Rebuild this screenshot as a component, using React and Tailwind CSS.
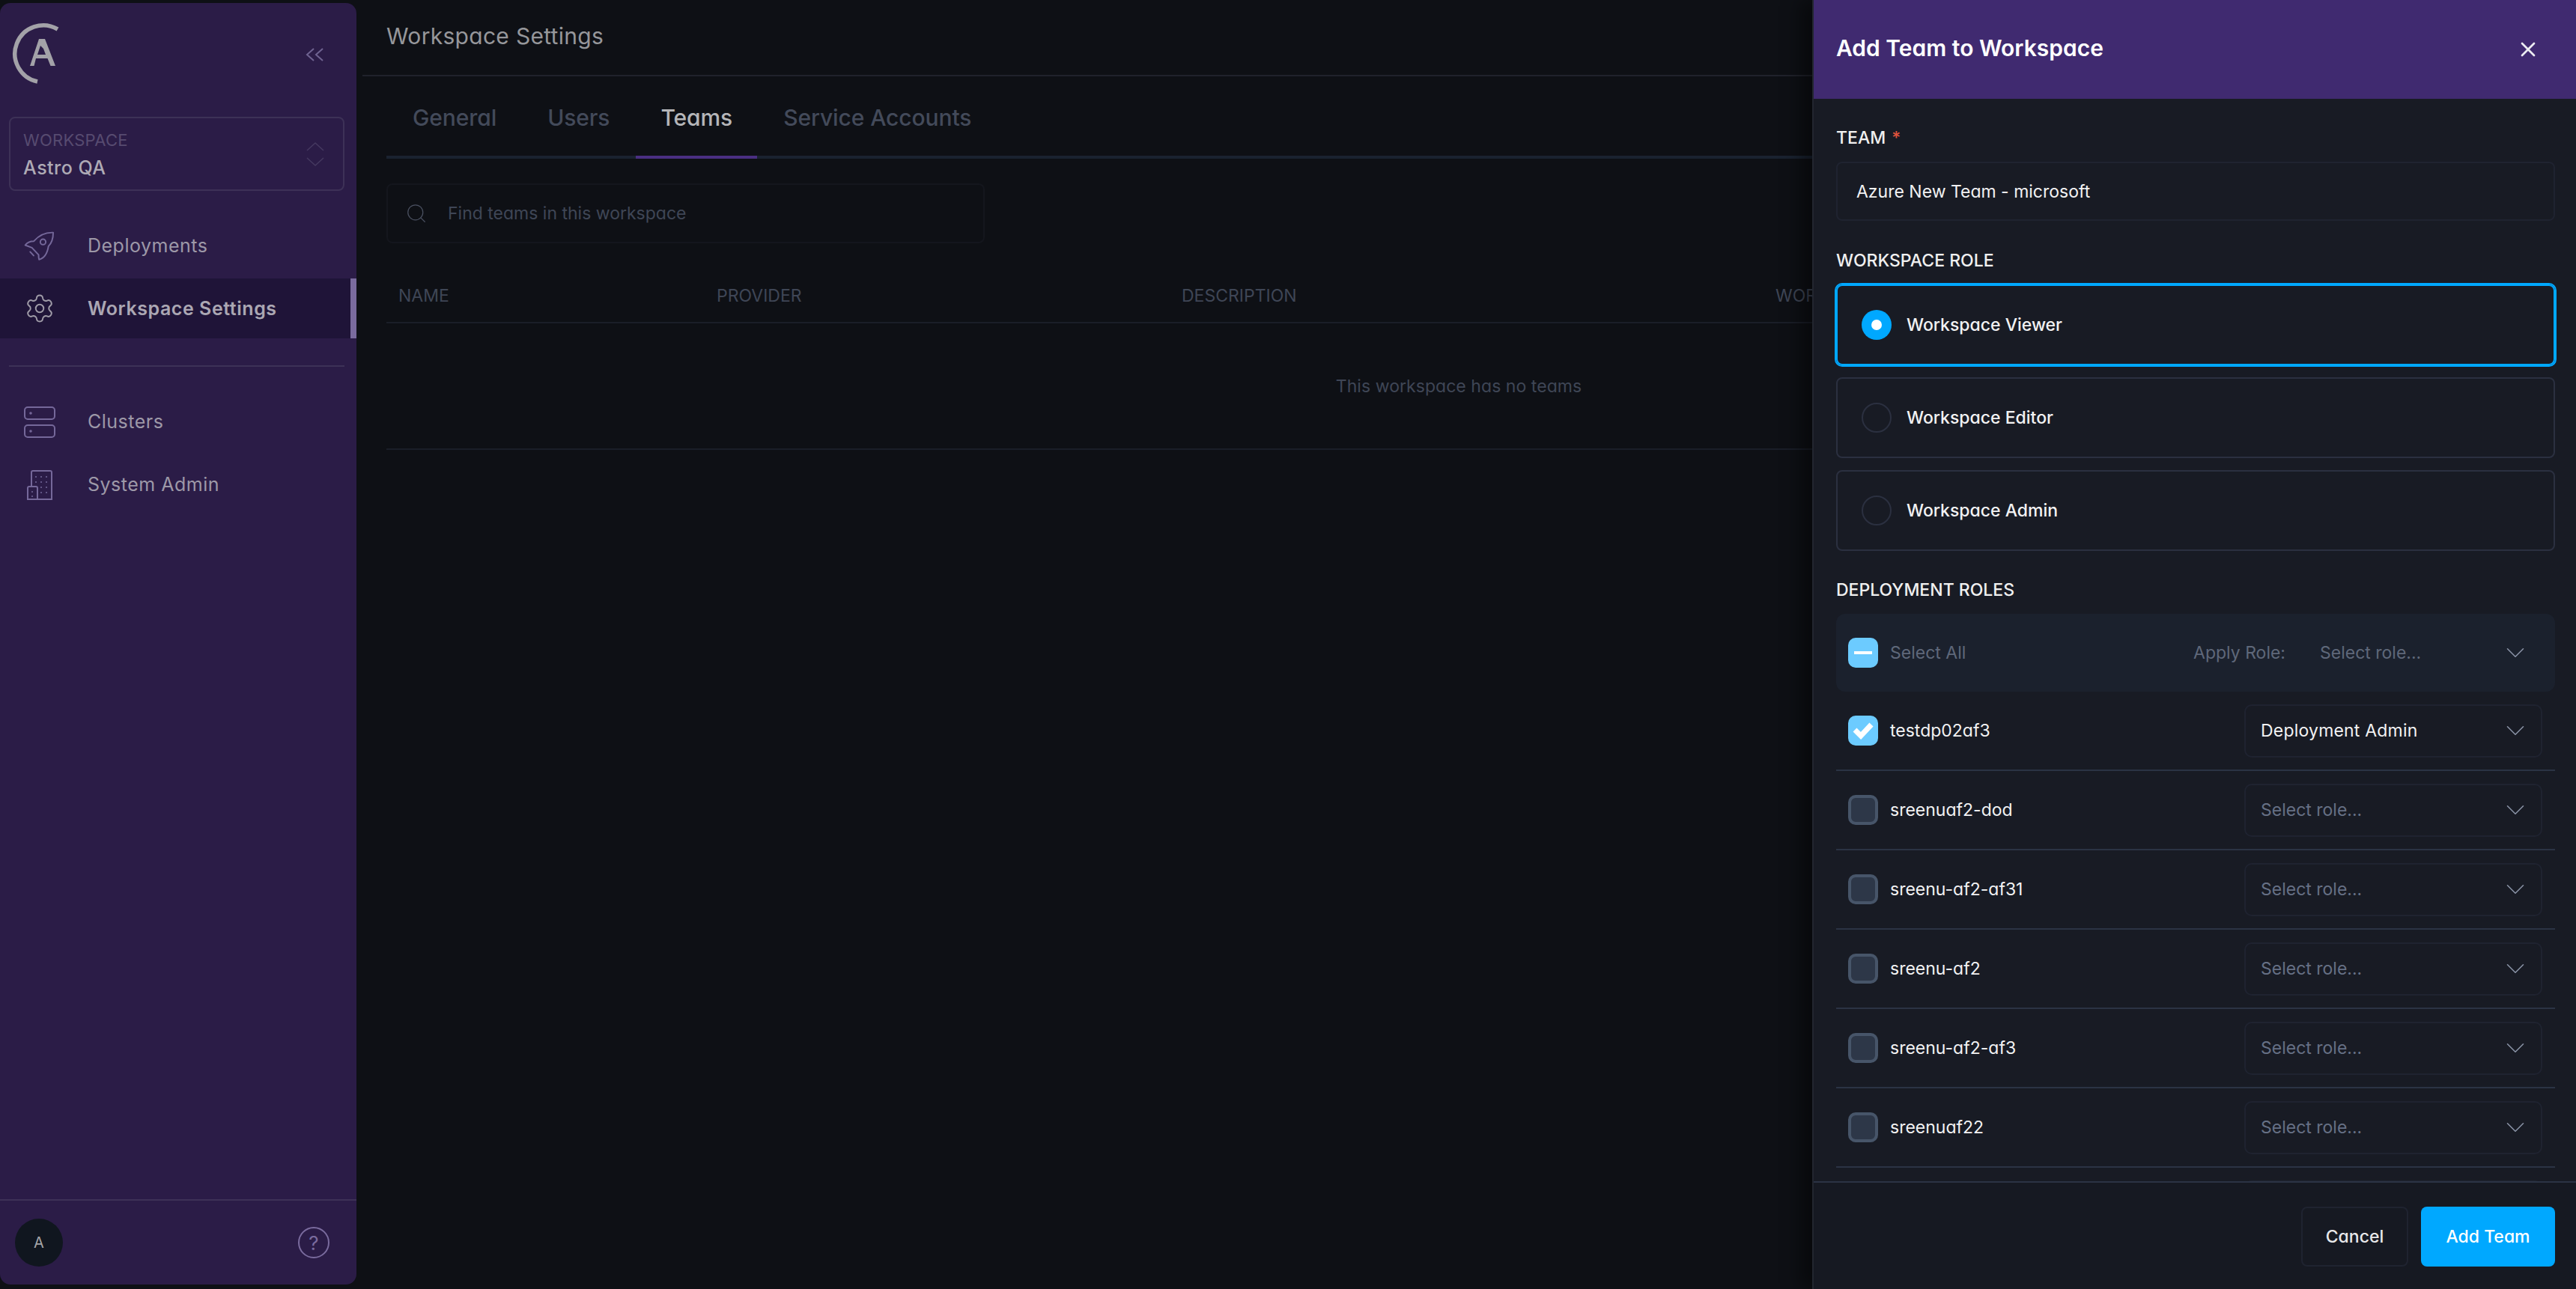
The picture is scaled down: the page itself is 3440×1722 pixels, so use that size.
import React from "react";
import { ChevronDown, Search, Settings, X } from "lucide-react";

const font = "font-['Inter','Liberation_Sans',sans-serif]";
const alt = "[font-feature-settings:'cv11']";

const Logo = () => (
  <svg width="66" height="84" viewBox="0 0 66 84" fill="none">
    <path d="M62 11 A38 38 0 1 0 35 81" stroke="#a3a2a8" strokeWidth="5.5" />
    <path fillRule="evenodd" d="M25 60 L37 24 L45 24 L59 60 L52.5 60 L48.5 50 L33 50 L30.5 60 Z M39 33 L35 45 L46 45 L43 37 Z" fill="#a3a2a8" />
  </svg>
);

const RocketIcon = () => (
  <svg width="43" height="42" viewBox="60 50 130 125" fill="none" stroke="#75689a" strokeWidth="6" strokeLinejoin="round" strokeLinecap="round">
    <path d="M181 57 C150 56 125 66 103 92 C90 92 78 94 68 108 L95 118 L122 147 C122 154 122 160 124 166 C140 162 156 150 162 112 C176 98 181 80 181 57 Z" />
    <circle cx="140" cy="95" r="11" />
    <path d="M88 135 L102 150" />
  </svg>
);

const ClustersIcon = () => (
  <svg width="42" height="42" viewBox="0 0 42 42" fill="none" stroke="#75689a" strokeWidth="2">
    <rect x="1" y="1" width="40" height="16" rx="4" />
    <rect x="1" y="25" width="40" height="16" rx="4" />
    <circle cx="9" cy="9" r="0.8" fill="#75689a" />
    <circle cx="9" cy="33" r="0.8" fill="#75689a" />
  </svg>
);

const BuildingIcon = () => (
  <svg width="34" height="40" viewBox="0 0 34 40" fill="none" stroke="#75689a" strokeWidth="2">
    <path d="M6 22 V3 Q6 1 8 1 H31 Q33 1 33 3 V39 H14" />
    <path d="M1 39 V24 Q1 22 3 22 H12 Q14 22 14 24 V39 Z" />
    <g fill="#75689a" stroke="none">
      <circle cx="12" cy="9" r="1" /><circle cx="19" cy="9" r="1" /><circle cx="26" cy="9" r="1" />
      <circle cx="12" cy="16" r="1" /><circle cx="19" cy="16" r="1" /><circle cx="26" cy="16" r="1" />
      <circle cx="19" cy="23" r="1" /><circle cx="26" cy="23" r="1" />
      <circle cx="19" cy="30" r="1" /><circle cx="26" cy="30" r="1" />
      <circle cx="7" cy="29" r="1" /><circle cx="7" cy="35" r="1" />
    </g>
  </svg>
);

const NavItem = ({ icon, label, active }) => (
  <div className={active ? "relative flex items-center h-[80px] bg-[#1f1438] pl-[31px]" : "flex items-center h-[84px] pl-[31px]"}>
    <div className="w-[43px] flex justify-center shrink-0">{icon}</div>
    <span className={active ? "ml-[43px] pt-[2px] text-[25px] font-semibold tracking-[0.55px] text-[#aba7b3]" : "ml-[43px] text-[25px] tracking-[0.5px] text-[#9d98a8]"}>{label}</span>
    {active && <div className="absolute right-0 top-0 bottom-0 w-[8px] bg-[#7a6b9e]" />}
  </div>
);

const Sidebar = () => (
  <aside className="w-[476px] h-[1712px] mt-[4px] shrink-0 bg-[#2b1c47] rounded-[14px] flex flex-col">
    <div className="flex items-start justify-between h-[152px] pl-[15px] pr-[44px] pt-[24px]">
      <Logo />
      <svg className="mt-[35px]" width="24" height="20" viewBox="0 0 24 20" fill="none" stroke="#6f6391" strokeWidth="2">
        <path d="M11 2 L2 10 L11 18" /><path d="M23 2 L14 10 L23 18" />
      </svg>
    </div>
    <div className="ml-[12px] mr-[16px] h-[99px] border-2 border-[#3d3157] rounded-[8px] flex items-center justify-between pl-[17px] pr-[25px]">
      <div className="pt-[2px]">
        <div className="text-[22px] leading-[28px] tracking-[0.25px] text-[#574b70]">WORKSPACE</div>
        <div className="text-[25px] leading-[34px] mt-[6px] font-medium tracking-[0.5px] text-[#aeaab5]">Astro QA</div>
      </div>
      <svg width="24" height="34" viewBox="0 0 24 34" fill="none" stroke="#453960" strokeWidth="1.5">
        <path d="M1 12 L12 2 L23 12" /><path d="M1 22 L12 32 L23 22" />
      </svg>
    </div>
    <div className="mt-[32px]">
      <NavItem icon={<RocketIcon />} label="Deployments" />
    </div>
    <div className="mt-[1px]">
      <NavItem active icon={<Settings size={42} strokeWidth={1.1} color="#a09ca8" />} label="Workspace Settings" />
    </div>
    <div className="ml-[12px] mr-[16px] mt-[36px] h-[2px] bg-[#3d3157]" />
    <div className="mt-[32px]">
      <NavItem icon={<ClustersIcon />} label="Clusters" />
      <NavItem icon={<BuildingIcon />} label="System Admin" />
    </div>
    <div className="mt-auto border-t-2 border-[#3d3157] h-[114px] flex items-center justify-between pl-[20px] pr-[36px]">
      <div className="w-[64px] h-[64px] rounded-full bg-[#10161f] flex items-center justify-center text-[20px] text-[#a5a5a8]">A</div>
      <div className="w-[42px] h-[42px] rounded-full border-2 border-[#7a6b9e] flex items-center justify-center text-[26px] text-[#7a6b9e]">?</div>
    </div>
  </aside>
);

const Main = () => (
  <main className={`flex-1 min-w-0 ${alt}`}>
    <div className="ml-[8px] h-[102px] border-b-2 border-[#20222b] pl-[32px] pb-[4px] flex items-center text-[30px] tracking-[0.3px] text-[#96979b]">Workspace Settings</div>
    <div className="pl-[40px] pr-[60px]">
      <div className="flex h-[110px] border-b-4 border-[#1a2230] gap-[2px] pl-[2px]">
        {["General", "Users", "Teams", "Service Accounts"].map((t) => (
          <div key={t} className={t === "Teams" ? "relative px-[33px] pt-[4px] flex items-center text-[30px] font-medium tracking-[-0.1px] text-[#b5b6b9]" : "px-[33px] pt-[4px] flex items-center text-[30px] font-medium tracking-[-0.1px] text-[#434a5a]"}>
            {t}
            {t === "Teams" && <div className="absolute left-0 right-0 -bottom-[4px] h-[4px] bg-[#4a2f82]" />}
          </div>
        ))}
      </div>
      <div className="mt-[33px] w-[799px] h-[80px] border-2 border-[#14161d] rounded-[8px] flex items-center pl-[23px]">
        <Search size={30} strokeWidth={1} color="#4a5060" />
        <span className="ml-[27px] pt-[1px] text-[23px] text-[#3f4656]">Find teams in this workspace</span>
      </div>
      <div className="flex h-[107px] border-b-2 border-[#1a1e28] pl-[16px] items-center pt-[35px] text-[23px] text-[#3f4656]">
        <div className="w-[425px]">NAME</div>
        <div className="w-[621px]">PROVIDER</div>
        <div className="w-[793px]">DESCRIPTION</div>
        <div>WORKSPACE ROLE</div>
      </div>
      <div className="h-[169px] pt-[1px] border-b-2 border-[#1a1e28] flex items-center justify-center text-[23px] tracking-[0.05px] text-[#3f4656]">This workspace has no teams</div>
    </div>
  </main>
);

const RoleCard = ({ label, active }) => (
  <div className={active ? "h-[108px] rounded-[8px] border-2 border-[#00a8ff] outline-2 outline-[#00a8ff] flex items-center pl-[32px]" : "h-[108px] rounded-[8px] border-2 border-[#2b3040] flex items-center pl-[32px]"}>
    {active ? (
      <div className="w-[40px] h-[40px] rounded-full bg-[#00a8ff] flex items-center justify-center">
        <div className="w-[14px] h-[14px] rounded-full bg-white" />
      </div>
    ) : (
      <div className="w-[40px] h-[40px] rounded-full border-2 border-[#2b3040]" />
    )}
    <span className="ml-[20px] text-[23px] font-medium text-[#f2f2f3]">{label}</span>
  </div>
);

const RoleRow = ({ name, role, checked }) => (
  <div className="h-[106px] border-b-2 border-[#2b3344] flex items-center pl-[16px] pr-[17px]">
    {name && (checked ? (
      <div className="w-[40px] h-[40px] rounded-[10px] bg-[#6ccbff] flex items-center justify-center">
        <svg width="28" height="24" viewBox="0 0 28 24" fill="none" stroke="#fff" strokeWidth="7"><path d="M3 11 L11 19 L25 4" /></svg>
      </div>
    ) : (
      <div className="w-[40px] h-[40px] rounded-[10px] bg-[#2d3748] border-4 border-[#475569]" />
    ))}
    <span className="ml-[16px] text-[23px] text-[#f2f2f3]">{name}</span>
    <div className="ml-auto w-[398px] h-[71px] border-2 border-[#1f2330] rounded-[10px] flex items-center pl-[20px] pr-[13px]">
      {name && <span className={role ? "text-[23px] tracking-[0.2px] text-[#f2f2f3]" : "text-[23px] text-[#667085]"}>{role || "Select role..."}</span>}
      {name && <ChevronDown size={42} strokeWidth={0.9} color="#8a93a6" className="ml-auto" />}
    </div>
  </div>
);

const Panel = () => (
  <section className={`absolute top-0 right-0 bottom-0 w-[1020px] bg-[#181b24] border-l-2 border-[#22262f] shadow-[-16px_0_24px_rgba(0,0,0,0.45)] flex flex-col ${alt}`}>
    <div className="h-[132px] shrink-0 bg-[#402a70] flex items-center justify-between pl-[30px] pr-[48px] pb-[4px]">
      <h2 className="text-[30px] font-semibold text-white">Add Team to Workspace</h2>
      <X size={32} strokeWidth={2} color="#ececf2" className="mt-[4px]" />
    </div>
    <div className="flex-1 min-h-0 overflow-hidden pl-[30px] pr-[28px]">
      <div className="mt-[36px] h-[32px] flex items-center text-[23px] font-medium text-[#f0f0f0]">TEAM<span className="ml-[8px] text-[#e0533d]">*</span></div>
      <div className="mt-[16px] h-[79px] pt-[1px] border-2 border-[#1f2330] rounded-[8px] flex items-center pl-[25px] text-[23px] text-[#f2f2f3]">Azure New Team - microsoft</div>
      <div className="mt-[37px] h-[32px] flex items-center text-[23px] font-medium text-[#f0f0f0]">WORKSPACE ROLE</div>
      <div className="mt-[16px] flex flex-col gap-[16px]">
        <RoleCard active label="Workspace Viewer" />
        <RoleCard label="Workspace Editor" />
        <RoleCard label="Workspace Admin" />
      </div>
      <div className="mt-[35px] h-[32px] pt-[2px] flex items-center text-[23px] font-medium text-[#f0f0f0]">DEPLOYMENT ROLES</div>
      <div className="mt-[17px] h-[104px] rounded-[12px] bg-[#1b212d] flex items-center pl-[16px] pr-[32px] text-[23px] text-[#5f687a]">
        <div className="w-[40px] h-[40px] rounded-[10px] bg-[#6ccbff] flex items-center justify-center">
          <div className="w-[24px] h-[4px] bg-white" />
        </div>
        <span className="ml-[16px]">Select All</span>
        <span className="ml-auto">Apply Role:</span>
        <span className="ml-[46px] w-[240px]">Select role...</span>
        <ChevronDown size={42} strokeWidth={0.9} color="#8a93a6" />
      </div>
      <RoleRow name="testdp02af3" role="Deployment Admin" checked />
      <RoleRow name="sreenuaf2-dod" />
      <RoleRow name="sreenu-af2-af31" />
      <RoleRow name="sreenu-af2" />
      <RoleRow name="sreenu-af2-af3" />
      <RoleRow name="sreenuaf22" />
      <RoleRow />
    </div>
    <div className="h-[144px] shrink-0 border-t-2 border-[#2b3344] bg-[#161922] flex items-start justify-end gap-[17px] pt-[32px] pr-[28px] text-[23px] font-medium">
      <button className="w-[143px] h-[80px] border-2 border-[#1f2330] rounded-[8px] text-[#e8e8ea]">Cancel</button>
      <button className="w-[179px] h-[80px] rounded-[8px] bg-[#00a8ff] text-white">Add Team</button>
    </div>
  </section>
);

export default function App() {
  return (
    <div className={`relative w-[3440px] h-[1722px] overflow-hidden bg-[#0e1015] flex ${font}`}>
      <Sidebar />
      <Main />
      <Panel />
    </div>
  );
}
